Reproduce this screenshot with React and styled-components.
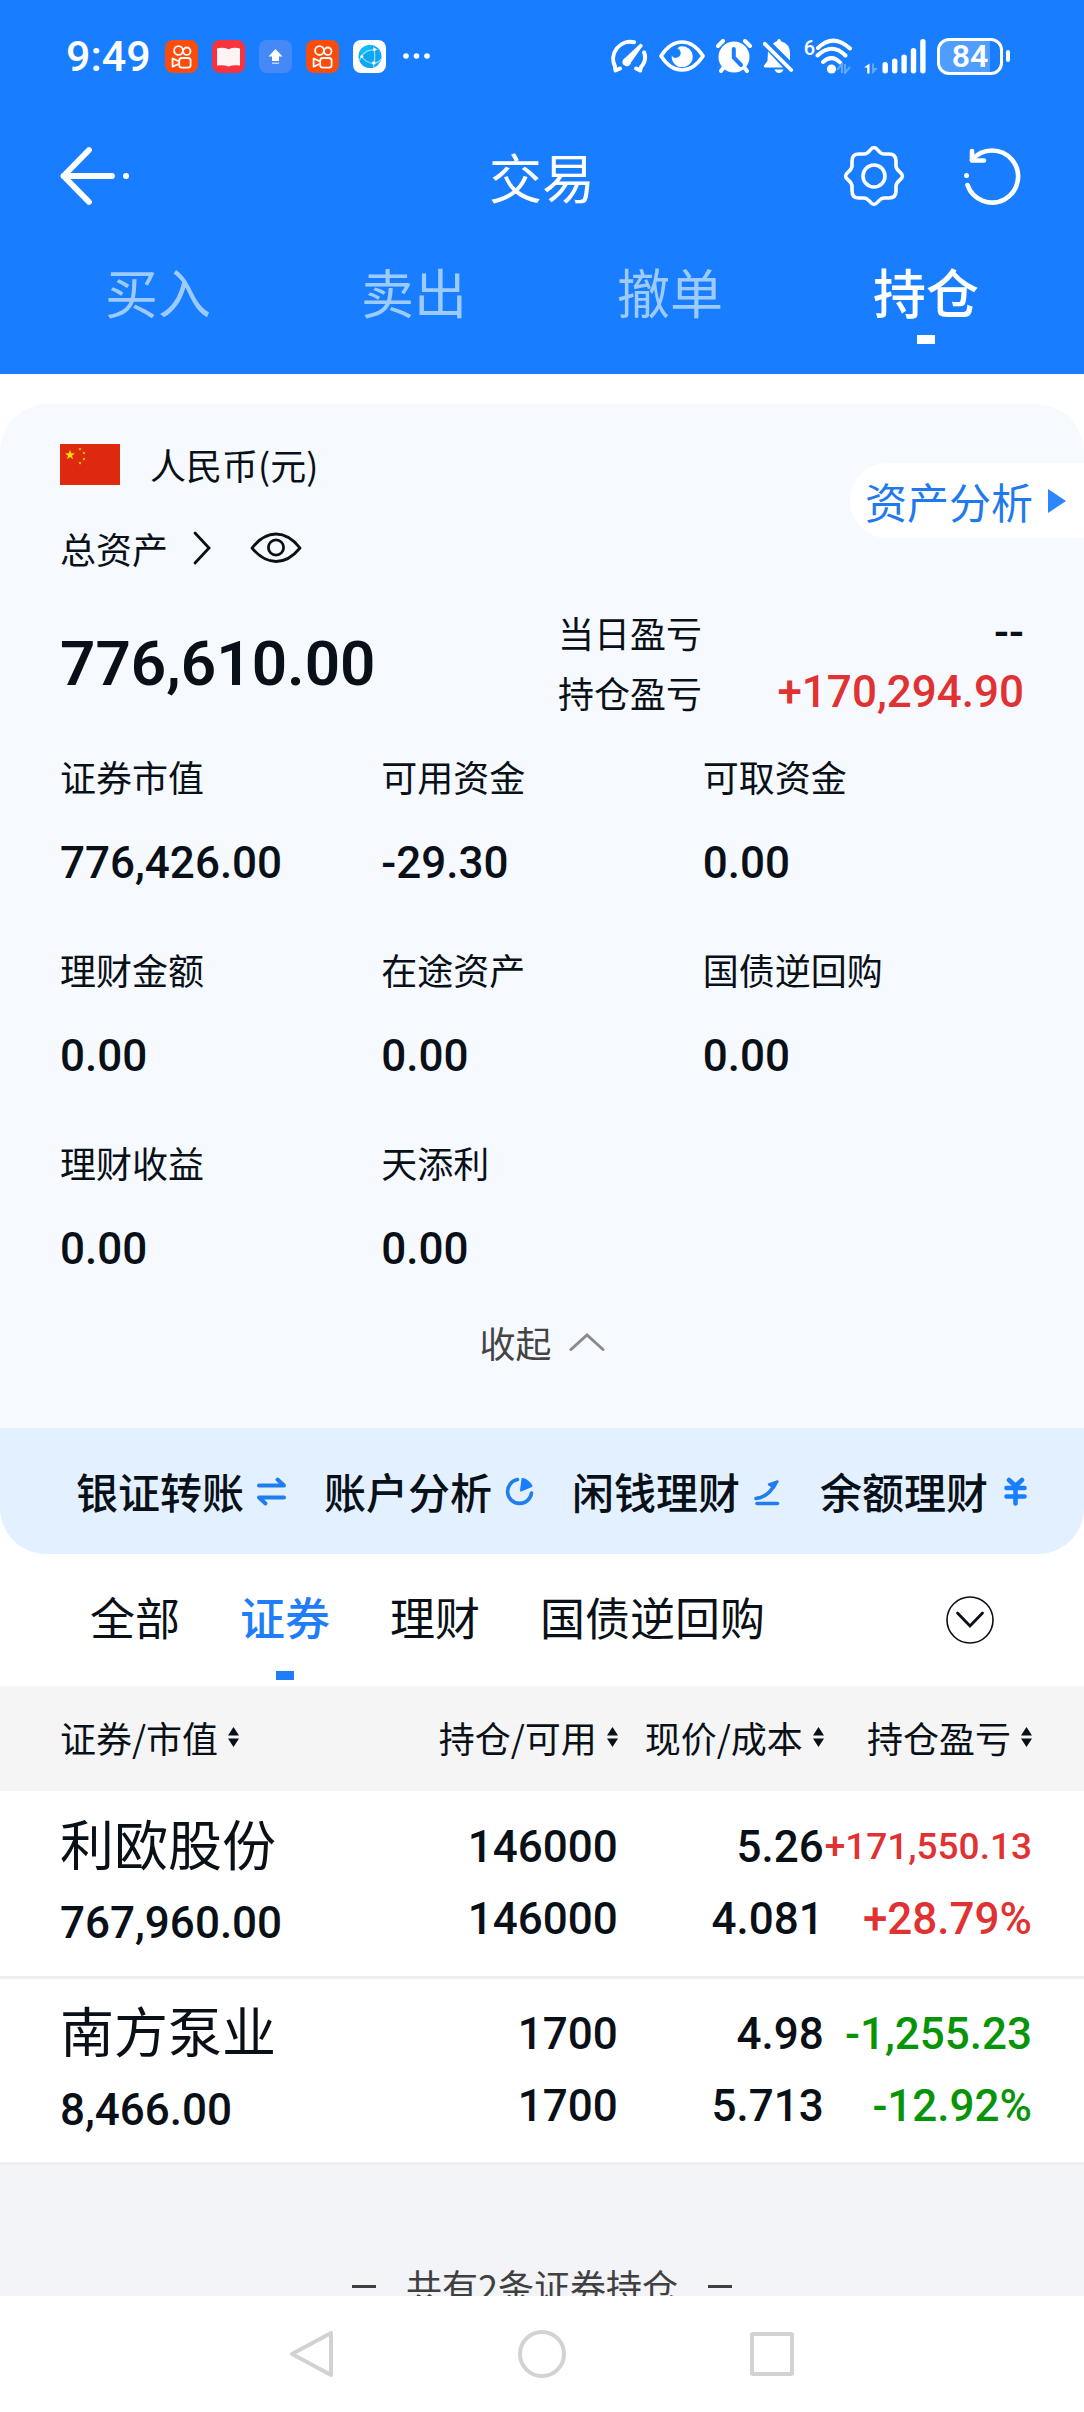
import { useState } from "react";
import styled, { createGlobalStyle } from "styled-components";

const GlobalStyle = createGlobalStyle`
  *, *::before, *::after {
    box-sizing: border-box;
    margin: 0;
    padding: 0;
  }

  body {
    background: #fff;
    color: #0a1018;
    font-family: "Noto Sans CJK SC", sans-serif;
  }

  button {
    border: 0;
    background: none;
    color: inherit;
    font: inherit;
    cursor: pointer;
  }

  svg {
    display: block;
    flex: none;
  }
`;

const numberFont = `Roboto, "Liberation Sans", sans-serif`;

const Page = styled.div`
  display: flex;
  flex-direction: column;
  height: 100vh;
`;

const Content = styled.main`
  display: flex;
  flex: 1;
  flex-direction: column;
  min-height: 0;
  overflow-y: auto;
  scrollbar-width: none;
`;

/* ---------- header ---------- */

const Header = styled.header`
  flex: none;
  background: #187eff;
  color: #fff;
`;

const StatusBar = styled.div`
  display: flex;
  align-items: center;
  justify-content: space-between;
  height: 112px;
  padding: 0 74px 0 66px;
`;

const StatusGroup = styled.div`
  display: flex;
  align-items: center;
  gap: ${({ $gap }) => $gap}px;
`;

const Clock = styled.time`
  font: 500 43px/48px ${numberFont};
`;

const WifiBox = styled.div`
  display: flex;
  align-items: flex-start;
`;

const WifiGen = styled.span`
  font: 500 20px/20px ${numberFont};
`;

const Battery = styled.div`
  display: flex;
  align-items: center;
  gap: 3px;

  &::after {
    content: "";
    width: 4px;
    height: 12px;
    border-radius: 2px;
    background: #fff;
  }
`;

const BatteryBody = styled.div`
  width: 66px;
  height: 37px;
  border: 3px solid #fff;
  border-radius: 12px;
  background: linear-gradient(90deg, #4f9dff 84%, transparent 84%);
  font: 600 32px/31px ${numberFont};
  text-align: center;
`;

const TitleBar = styled.div`
  display: grid;
  grid-template-columns: 1fr auto 1fr;
  align-items: center;
  height: 128px;
  padding: 0 60px;
`;

const Title = styled.h1`
  font-size: 53px;
  font-weight: 400;
  line-height: 72px;
`;

const TitleActions = styled.div`
  display: flex;
  justify-content: ${({ $align }) => $align};
  gap: 58px;
`;

const MainTabs = styled.nav`
  display: grid;
  grid-template-columns: repeat(4, 1fr);
  padding: 21px 30px 30px;
`;

const MainTab = styled.button`
  display: flex;
  flex-direction: column;
  align-items: center;
  gap: 14px;
  color: ${({ $active }) => ($active ? "#fff" : "#9dcbff")};
  font-size: 53px;
  font-weight: ${({ $active }) => ($active ? 500 : 400)};
  line-height: 60px;

  &::after {
    content: "";
    width: 18px;
    height: 9px;
    background: ${({ $active }) => ($active ? "#fff" : "transparent")};
  }
`;

/* ---------- asset card ---------- */

const Card = styled.section`
  flex: none;
  margin-top: 30px;
  padding: 30px 0 56px;
  border-radius: 48px 48px 0 0;
  background: #f6faff;
  font-size: 36px;
  line-height: 60px;
`;

const CardHead = styled.div`
  display: flex;
  align-items: flex-start;
  justify-content: space-between;
  padding-left: 60px;
`;

const HeadRows = styled.div`
  display: flex;
  flex-direction: column;
  gap: 24px;
`;

const HeadRow = styled.div`
  display: flex;
  align-items: center;
  gap: ${({ $gap }) => $gap}px;
`;

const LinkButton = styled.button`
  display: flex;
  align-items: center;
  gap: 24px;
`;

const AnalysisLink = styled.a`
  display: flex;
  align-items: center;
  gap: 15px;
  height: 75px;
  margin-top: 29px;
  padding: 0 18px 0 15px;
  border-radius: 38px 0 0 38px;
  background: #fff;
  color: #1f7af0;
  font-size: 42px;
  text-decoration: none;
`;

const Summary = styled.div`
  display: grid;
  grid-template-columns: 31fr 29fr;
  align-items: center;
  margin-top: 24px;
  padding: 0 60px;
`;

const Total = styled.strong`
  padding-top: 4px;
  font: 600 62px/84px ${numberFont};
`;

const ProfitRow = styled.div`
  display: flex;
  align-items: center;
  justify-content: space-between;
`;

const Num = styled.span`
  color: ${({ $tone }) => ({ up: "#e03232", down: "#089408" })[$tone] || "inherit"};
  font: 500 ${({ $compact }) => ($compact ? 37 : 44)}px/60px ${numberFont};
`;

const Figures = styled.dl`
  display: grid;
  grid-template-columns: repeat(3, 1fr);
  row-gap: 46px;
  margin-top: 24px;
  padding: 0 60px;
`;

const Figure = styled.div`
  display: flex;
  flex-direction: column;
  gap: 27px;
`;

const CollapseButton = styled.button`
  display: flex;
  align-items: center;
  gap: 17px;
  margin: 33px auto 0;
  color: #444;
`;

const QuickBar = styled.nav`
  display: grid;
  flex: none;
  grid-template-columns: repeat(4, 1fr);
  align-items: center;
  height: 126px;
  padding: 0 16px 0 76px;
  border-radius: 0 0 46px 46px;
  background: #e3f0ff;
`;

const QuickItem = styled.button`
  display: flex;
  align-items: center;
  gap: 12px;
  font-size: 42px;
  font-weight: 500;
  line-height: 60px;
  white-space: nowrap;
`;

/* ---------- holdings ---------- */

const FilterBar = styled.div`
  display: flex;
  flex: none;
  align-items: center;
  gap: 60px;
  height: 132px;
  padding: 0 90px;
`;

const FilterTab = styled.button`
  display: flex;
  flex-direction: column;
  align-items: center;
  gap: 24px;
  padding-top: 27px;
  color: ${({ $active }) => ($active ? "#1f7dfa" : "inherit")};
  font-size: 45px;
  font-weight: ${({ $active }) => ($active ? 500 : 400)};
  line-height: 60px;

  &::after {
    content: "";
    width: 18px;
    height: 9px;
    background: ${({ $active }) => ($active ? "#1f7dfa" : "transparent")};
  }
`;

const MoreButton = styled.button`
  margin-left: auto;
`;

const Holdings = styled.table`
  flex: none;
  width: 100%;
  border-collapse: collapse;
  table-layout: fixed;
`;

const HeadCell = styled.th`
  width: ${({ $width }) => $width};
  height: 105px;
  padding-bottom: 3px;
  background: #f5f5f5;
  text-align: right;

  &:first-child {
    padding-left: 60px;
    text-align: left;
  }

  &:last-child {
    padding-right: 52px;
  }
`;

const SortButton = styled.button`
  display: inline-flex;
  align-items: center;
  gap: 10px;
  font-size: 36px;
  font-weight: 400;
  line-height: 48px;
  white-space: nowrap;
`;

const Row = styled.tr`
  height: 186px;
  border-bottom: 3px solid #efefef;
`;

const Cell = styled.td`
  text-align: right;
  white-space: nowrap;

  &:first-child {
    padding-left: 60px;
    text-align: left;
  }

  &:last-child {
    padding-right: 52px;
  }
`;

const CellStack = styled.div`
  display: flex;
  flex-direction: column;
  gap: ${({ $gap }) => $gap}px;
`;

const StockName = styled.span`
  font-size: 54px;
  line-height: 60px;
`;

const EndNote = styled.p`
  display: flex;
  flex: 1;
  align-items: flex-start;
  justify-content: center;
  gap: 30px;
  padding-top: 96px;
  background: #f2f4f8;
  color: #404040;
  font-size: 36px;
  line-height: 48px;

  &::before,
  &::after {
    content: "";
    width: 24px;
    height: 3px;
    margin-top: 24px;
    background: #404040;
  }
`;

const SystemNav = styled.nav`
  display: flex;
  flex: none;
  align-items: center;
  justify-content: center;
  gap: 182px;
  height: 116px;
  background: #fff;
`;

/* ---------- icons ---------- */

function AppBadge({ fill, children }) {
  return (
    <svg width="33" height="33" viewBox="0 0 33 33">
      <rect width="33" height="33" rx="8" fill={fill} />
      {children}
    </svg>
  );
}

function VideoBadge() {
  return (
    <AppBadge fill="#fb4c0c">
      <g fill="none" stroke="#fff" strokeWidth="1.8" strokeLinejoin="round">
        <circle cx="13.5" cy="10.5" r="4.4" />
        <circle cx="21.8" cy="11.2" r="3.7" />
        <rect x="14.2" y="18" width="11.4" height="9.6" rx="2.6" />
        <path d="M13.5 21.2 7.6 18.4v8.2l5.9-2.6" />
      </g>
    </AppBadge>
  );
}

function BookBadge() {
  return (
    <AppBadge fill="#f7343e">
      <path d="M5 8.4q6-1.6 11.5.8 5.5-2.4 11.5-.8v17.2q-6-1.2-11.5.8-5.5-2-11.5-.8Z" fill="#fff4f4" />
    </AppBadge>
  );
}

function UploadBadge() {
  return (
    <AppBadge fill="#4489f6">
      <path d="M16.5 9 23.5 16.500H20V21h-7v-4.500H9.500Z" fill="#fff" />
      <path d="M13 22.500h7V24h-7Z" fill="#b9d3fb" />
    </AppBadge>
  );
}

function GlobeBadge() {
  return (
    <AppBadge fill="#fff">
      <circle cx="17" cy="16.5" r="11.5" fill="#12a5f4" />
      <path d="M6 14a11.5 11.5 0 0 1 14-8.700L9 16.500Z" fill="#0cc0f6" />
      <g fill="none" stroke="#8be3ff" strokeWidth="1.2">
        <path d="M8.500 16.500Q13 9 24.500 9.500M8.500 16.500Q13 23 21 23.500 27 22 28 19M20.500 7Q23 15 20.500 27M8.500 16.500 6 21" />
      </g>
      <circle cx="8.8" cy="16.5" r="1.5" fill="#fff" />
      <circle cx="21.5" cy="9.5" r="1.5" fill="#fff" />
      <circle cx="20.8" cy="23" r="1.7" fill="#fff" />
    </AppBadge>
  );
}

function MoreDots() {
  return (
    <svg width="32" height="8" viewBox="0 0 32 8" fill="#fff">
      <circle cx="6" cy="4" r="2.8" />
      <circle cx="16.5" cy="4" r="2.8" />
      <circle cx="27" cy="4" r="2.8" />
    </svg>
  );
}

function GaugeIcon() {
  return (
    <svg width="40" height="34" viewBox="0 0 40 34" fill="none" stroke="#fff" strokeWidth="4" strokeLinecap="round" strokeLinejoin="round">
      <path d="M12 29.5 7.5 31.5 7 27.5A17 17 0 0 1 26 3.3" />
      <path d="M36.2 13.5Q39 21.5 33 28l-.8 3.5-4-2" />
      <path d="M32.500 4.500 35 6.500 23 23.500a4.300 4.300 0 1 1-6-4.500Z" fill="#fff" stroke="none" />
    </svg>
  );
}

function StatusEyeIcon() {
  return (
    <svg width="46" height="32" viewBox="0 0 46 32">
      <path d="M2 16Q11 2 23 2t21 14Q35 30 23 30T2 16Z" fill="none" stroke="#fff" strokeWidth="3.6" strokeLinejoin="round" />
      <path d="M21 6.500A10.500 10.500 0 1 1 12.800 15.500Q14 18.500 17.500 17.800 22.500 16.500 21.500 11.500 21 9.500 18.500 8.500Q19.500 7 21 6.500Z" fill="#fff" />
    </svg>
  );
}

function AlarmIcon() {
  return (
    <svg width="36" height="34" viewBox="0 0 36 34" fill="none" strokeLinecap="round">
      <circle cx="18" cy="18" r="15.5" fill="#fff" />
      <path d="M2 7 7 2M34 7l-5-5M8 28l-3 4M28 28l3 4" stroke="#fff" strokeWidth="4" />
      <path d="M17.800 10v8.500l7.200 7.500" stroke="#187eff" strokeWidth="4" strokeLinejoin="round" />
    </svg>
  );
}

function BellOffIcon() {
  return (
    <svg width="30" height="34" viewBox="0 0 30 34">
      <path d="M10 4.800Q12 2.500 14 2.200 14.500 0 16 0t2 2.200Q27 5 27 14v7.500Z" fill="#fff" />
      <path d="M5 12.500 20 28.500H2.200Q.5 28.500.800 26.800L4.500 22Z" fill="#fff" />
      <path d="M1.800 4.800 28.200 31" stroke="#fff" strokeWidth="3.8" strokeLinecap="round" />
      <path d="M11.500 30.500h9q-1.500 3.500-4.500 3.500t-4.500-3.500Z" fill="#fff" />
    </svg>
  );
}

function WifiIcon() {
  return (
    <svg width="38" height="36" viewBox="0 0 38 36" fill="none" stroke="#fff" strokeWidth="4" strokeLinecap="round">
      <path d="M3 10Q18 -5 35 10.500M2.500 17.500Q17 4 30.500 17.500M8 24q9-8 17 .5" />
      <circle cx="16.5" cy="31" r="4.6" fill="#fff" stroke="none" />
      <path d="m22 32 5-6v9M30 26v9l5-6" stroke="#62a8ff" strokeWidth="2" strokeLinecap="butt" />
    </svg>
  );
}

function SignalIcon() {
  return (
    <svg width="62" height="36" viewBox="0 0 62 36" fill="#fff">
      <path d="M5.500 25.500v10H3.200v-6H0Z" />
      <path d="M8 25.500h2v4.500h4L9 35.500H8Z" fill="#62a8ff" />
      <rect x="18.500" y="24" width="5.4" height="11.5" rx="2.7" />
      <rect x="28" y="20.5" width="5.4" height="15" rx="2.7" />
      <rect x="37.4" y="16.5" width="5.4" height="19" rx="2.7" />
      <rect x="46.8" y="10" width="5.4" height="25.5" rx="2.7" />
      <rect x="56.200" y="1" width="5.4" height="34.5" rx="2.7" />
    </svg>
  );
}

function BackIcon() {
  return (
    <svg width="72" height="60" viewBox="0 0 72 60" fill="none" stroke="#fff" strokeWidth="5.8" strokeLinecap="round" strokeLinejoin="round">
      <path d="M29 4 3.500 30 29 56M3.500 30H52" />
      <circle cx="66" cy="30" r="3" fill="#fff" stroke="none" />
    </svg>
  );
}

function GearIcon() {
  return (
    <svg width="64" height="64" viewBox="0 0 64 64" fill="none" stroke="#fff" strokeWidth="3.6">
      <path d="M32 3.500c3.500 0 5 6.500 10 6.500h5q7 0 7 7v5c0 5 6.500 6.500 6.500 10s-6.500 5-6.500 10v5q0 7-7 7h-5c-5 0-6.500 6.500-10 6.500s-5-6.500-10-6.500h-5q-7 0-7-7v-5c0-5-6.500-6.500-6.500-10s6.500-5 6.500-10v-5q0-7 7-7h5c5 0 6.500-6.500 10-6.500Z" />
      <circle cx="32" cy="32" r="11" />
    </svg>
  );
}

function RefreshIcon() {
  return (
    <svg width="60" height="60" viewBox="0 0 60 60" fill="none" stroke="#fff" strokeWidth="4.6" strokeLinecap="round" strokeLinejoin="round">
      <path d="M8 14A26 26 0 1 1 3.500 39" />
      <path d="M8 5v9.500h12" />
      <circle cx="2.5" cy="29.5" r="2.5" fill="#fff" stroke="none" />
    </svg>
  );
}

const STAR = "M0-10 2.36-3.24 9.51-3.09 3.8 1.24 5.88 8.09 0 4 -5.88 8.09 -3.8 1.24 -9.51-3.09 -2.36-3.24Z";

function FlagIcon() {
  return (
    <svg width="60" height="41" viewBox="0 0 60 41" fill="#ffde00">
      <rect width="60" height="41" fill="#de2910" />
      <path d={STAR} transform="translate(10 11) scale(.52)" />
      <path d={STAR} transform="translate(20 5) scale(.18)" />
      <path d={STAR} transform="translate(24 9) scale(.18)" />
      <path d={STAR} transform="translate(24 15) scale(.18)" />
      <path d={STAR} transform="translate(20 19) scale(.18)" />
    </svg>
  );
}

function ChevronRightIcon() {
  return (
    <svg width="20" height="34" viewBox="0 0 20 34" fill="none" stroke="#0a1018" strokeWidth="2.8" strokeLinecap="round">
      <path d="m3 2 14 15L3 32" />
    </svg>
  );
}

function EyeIcon() {
  return (
    <svg width="52" height="34" viewBox="0 0 52 34" fill="none" stroke="#0a1018" strokeWidth="2.8" strokeLinejoin="round">
      <path d="M2 17Q13 3 26 3t24 14Q39 30.500 26 30.500T2 17Z" />
      <circle cx="26" cy="16.5" r="7.6" />
    </svg>
  );
}

function TriangleIcon() {
  return (
    <svg width="18" height="24" viewBox="0 0 18 24" fill="#2c87ff">
      <path d="m0 0 18 12L0 24Z" />
    </svg>
  );
}

function CollapseIcon() {
  return (
    <svg width="36" height="20" viewBox="0 0 36 20" fill="none" stroke="#8a8a8a" strokeWidth="3" strokeLinecap="round">
      <path d="M2 17.500 18 3l16 14.500" />
    </svg>
  );
}

function QuickIcon({ children }) {
  return (
    <svg width="32" height="32" viewBox="0 0 32 32" fill="none" stroke="#1f7dee" strokeWidth="4" strokeLinecap="round" strokeLinejoin="round">
      {children}
    </svg>
  );
}

function SwapIcon() {
  return (
    <QuickIcon>
      <path d="M3 10.500h25L21.500 4.500M28 22.500H3L9.500 28.500" />
    </QuickIcon>
  );
}

function PieIcon() {
  return (
    <QuickIcon>
      <path d="M13.500 4.600A12 12 0 1 0 27.500 18" strokeWidth="3.6" />
      <path d="M18.500 4q5.500 1 9 7L17 15.500Z" fill="#187eff" stroke="#187eff" strokeWidth="2" />
    </QuickIcon>
  );
}

function GrowthIcon() {
  return (
    <QuickIcon>
      <path d="M4 23.500Q17 21.500 22.500 9.500" strokeWidth="3.600" />
      <path d="M17 9.500 25.500 6.500 22 12.500Z" fill="#1f7dee" strokeWidth="2.400" />
      <path d="M5 28.500h20.500" strokeWidth="3.600" />
    </QuickIcon>
  );
}

function YuanIcon() {
  return (
    <QuickIcon>
      <path d="m9 5 6.500 6L22 5M6.500 13h18M6.500 21.500h18M15.500 11v17.500" stroke="#187eff" strokeWidth="4.600" />
    </QuickIcon>
  );
}

function MoreIcon() {
  return (
    <svg width="48" height="48" viewBox="0 0 48 48" fill="none" stroke="#0a1018" strokeLinecap="round">
      <circle cx="24" cy="24" r="23" strokeWidth="1.6" />
      <path d="m11.500 17 12.500 13L36.500 17" strokeWidth="2.8" />
    </svg>
  );
}

function SortIcon() {
  return (
    <svg width="11" height="20" viewBox="0 0 11 20" fill="#0a1018">
      <path d="m5.500 0 5.500 8.500H0ZM0 11.500h11L5.500 20Z" />
    </svg>
  );
}

function SystemIcon({ children }) {
  return (
    <svg width="48" height="48" viewBox="0 0 48 48" fill="none" stroke="#d2d2d2" strokeWidth="4" strokeLinejoin="round">
      {children}
    </svg>
  );
}

/* ---------- data ---------- */

const mainTabs = ["买入", "卖出", "撤单", "持仓"];
const filters = ["全部", "证券", "理财", "国债逆回购"];

const figures = [
  ["证券市值", "776,426.00"],
  ["可用资金", "-29.30"],
  ["可取资金", "0.00"],
  ["理财金额", "0.00"],
  ["在途资产", "0.00"],
  ["国债逆回购", "0.00"],
  ["理财收益", "0.00"],
  ["天添利", "0.00"],
];

const quickLinks = [
  ["银证转账", SwapIcon],
  ["账户分析", PieIcon],
  ["闲钱理财", GrowthIcon],
  ["余额理财", YuanIcon],
];

const columns = [
  ["证券/市值", "34%"],
  ["持仓/可用", "23%"],
  ["现价/成本", "19%"],
  ["持仓盈亏", "24%"],
];

const holdings = [
  {
    name: "利欧股份",
    value: "767,960.00",
    amount: ["146000", "146000"],
    price: ["5.26", "4.081"],
    profit: ["+171,550.13", "+28.79%"],
    tone: "up",
  },
  {
    name: "南方泵业",
    value: "8,466.00",
    amount: ["1700", "1700"],
    price: ["4.98", "5.713"],
    profit: ["-1,255.23", "-12.92%"],
    tone: "down",
  },
];

// values of ten characters and more get a smaller size to stay inside the column
function NumberCell({ values, tone }) {
  return (
    <Cell>
      <CellStack $gap={12}>
        {values.map((value, i) => (
          <Num key={i} $tone={tone} $compact={value.length > 9}>
            {value}
          </Num>
        ))}
      </CellStack>
    </Cell>
  );
}

function App() {
  const [tab, setTab] = useState("持仓");
  const [filter, setFilter] = useState("证券");

  return (
    <>
      <GlobalStyle />
      <Page>
        <Content>
          <Header>
            <StatusBar>
              <StatusGroup $gap={14}>
                <Clock>9:49</Clock>
                <VideoBadge />
                <BookBadge />
                <UploadBadge />
                <VideoBadge />
                <GlobeBadge />
                <MoreDots />
              </StatusGroup>
              <StatusGroup $gap={11}>
                <GaugeIcon />
                <StatusEyeIcon />
                <AlarmIcon />
                <BellOffIcon />
                <WifiBox>
                  <WifiGen>6</WifiGen>
                  <WifiIcon />
                </WifiBox>
                <SignalIcon />
                <Battery>
                  <BatteryBody>84</BatteryBody>
                </Battery>
              </StatusGroup>
            </StatusBar>

            <TitleBar>
              <TitleActions $align="flex-start">
                <button type="button" aria-label="返回">
                  <BackIcon />
                </button>
              </TitleActions>
              <Title>交易</Title>
              <TitleActions $align="flex-end">
                <button type="button" aria-label="设置">
                  <GearIcon />
                </button>
                <button type="button" aria-label="刷新">
                  <RefreshIcon />
                </button>
              </TitleActions>
            </TitleBar>

            <MainTabs>
              {mainTabs.map((name) => (
                <MainTab key={name} type="button" $active={name === tab} onClick={() => setTab(name)}>
                  {name}
                </MainTab>
              ))}
            </MainTabs>
          </Header>

          <Card>
            <CardHead>
              <HeadRows>
                <HeadRow $gap={30}>
                  <FlagIcon />
                  人民币(元)
                </HeadRow>
                <HeadRow $gap={38}>
                  <LinkButton type="button">
                    总资产
                    <ChevronRightIcon />
                  </LinkButton>
                  <button type="button" aria-label="隐藏金额">
                    <EyeIcon />
                  </button>
                </HeadRow>
              </HeadRows>
              <AnalysisLink href="#analysis">
                资产分析
                <TriangleIcon />
              </AnalysisLink>
            </CardHead>

            <Summary>
              <Total>776,610.00</Total>
              <div>
                <ProfitRow>
                  当日盈亏
                  <Num>--</Num>
                </ProfitRow>
                <ProfitRow>
                  持仓盈亏
                  <Num $tone="up">+170,294.90</Num>
                </ProfitRow>
              </div>
            </Summary>

            <Figures>
              {figures.map(([label, value]) => (
                <Figure key={label}>
                  <dt>{label}</dt>
                  <Num as="dd">{value}</Num>
                </Figure>
              ))}
            </Figures>

            <CollapseButton type="button">
              收起
              <CollapseIcon />
            </CollapseButton>
          </Card>

          <QuickBar>
            {quickLinks.map(([label, Icon]) => (
              <QuickItem key={label} type="button">
                {label}
                <Icon />
              </QuickItem>
            ))}
          </QuickBar>

          <FilterBar>
            {filters.map((name) => (
              <FilterTab key={name} type="button" $active={name === filter} onClick={() => setFilter(name)}>
                {name}
              </FilterTab>
            ))}
            <MoreButton type="button" aria-label="更多">
              <MoreIcon />
            </MoreButton>
          </FilterBar>

          <Holdings>
            <thead>
              <tr>
                {columns.map(([label, width]) => (
                  <HeadCell key={label} scope="col" $width={width}>
                    <SortButton type="button">
                      {label}
                      <SortIcon />
                    </SortButton>
                  </HeadCell>
                ))}
              </tr>
            </thead>
            <tbody>
              {holdings.map((item) => (
                <Row key={item.name}>
                  <Cell>
                    <CellStack $gap={20}>
                      <StockName>{item.name}</StockName>
                      <Num>{item.value}</Num>
                    </CellStack>
                  </Cell>
                  <NumberCell values={item.amount} />
                  <NumberCell values={item.price} />
                  <NumberCell values={item.profit} tone={item.tone} />
                </Row>
              ))}
            </tbody>
          </Holdings>

          <EndNote>共有2条证券持仓</EndNote>
        </Content>

        <SystemNav>
          <button type="button" aria-label="后退">
            <SystemIcon>
              <path d="M43 3v42L4 24Z" />
            </SystemIcon>
          </button>
          <button type="button" aria-label="主页">
            <SystemIcon>
              <circle cx="24" cy="24" r="22" />
            </SystemIcon>
          </button>
          <button type="button" aria-label="最近任务">
            <SystemIcon>
              <rect x="4" y="4" width="40" height="40" rx="1" />
            </SystemIcon>
          </button>
        </SystemNav>
      </Page>
    </>
  );
}

export default App;
